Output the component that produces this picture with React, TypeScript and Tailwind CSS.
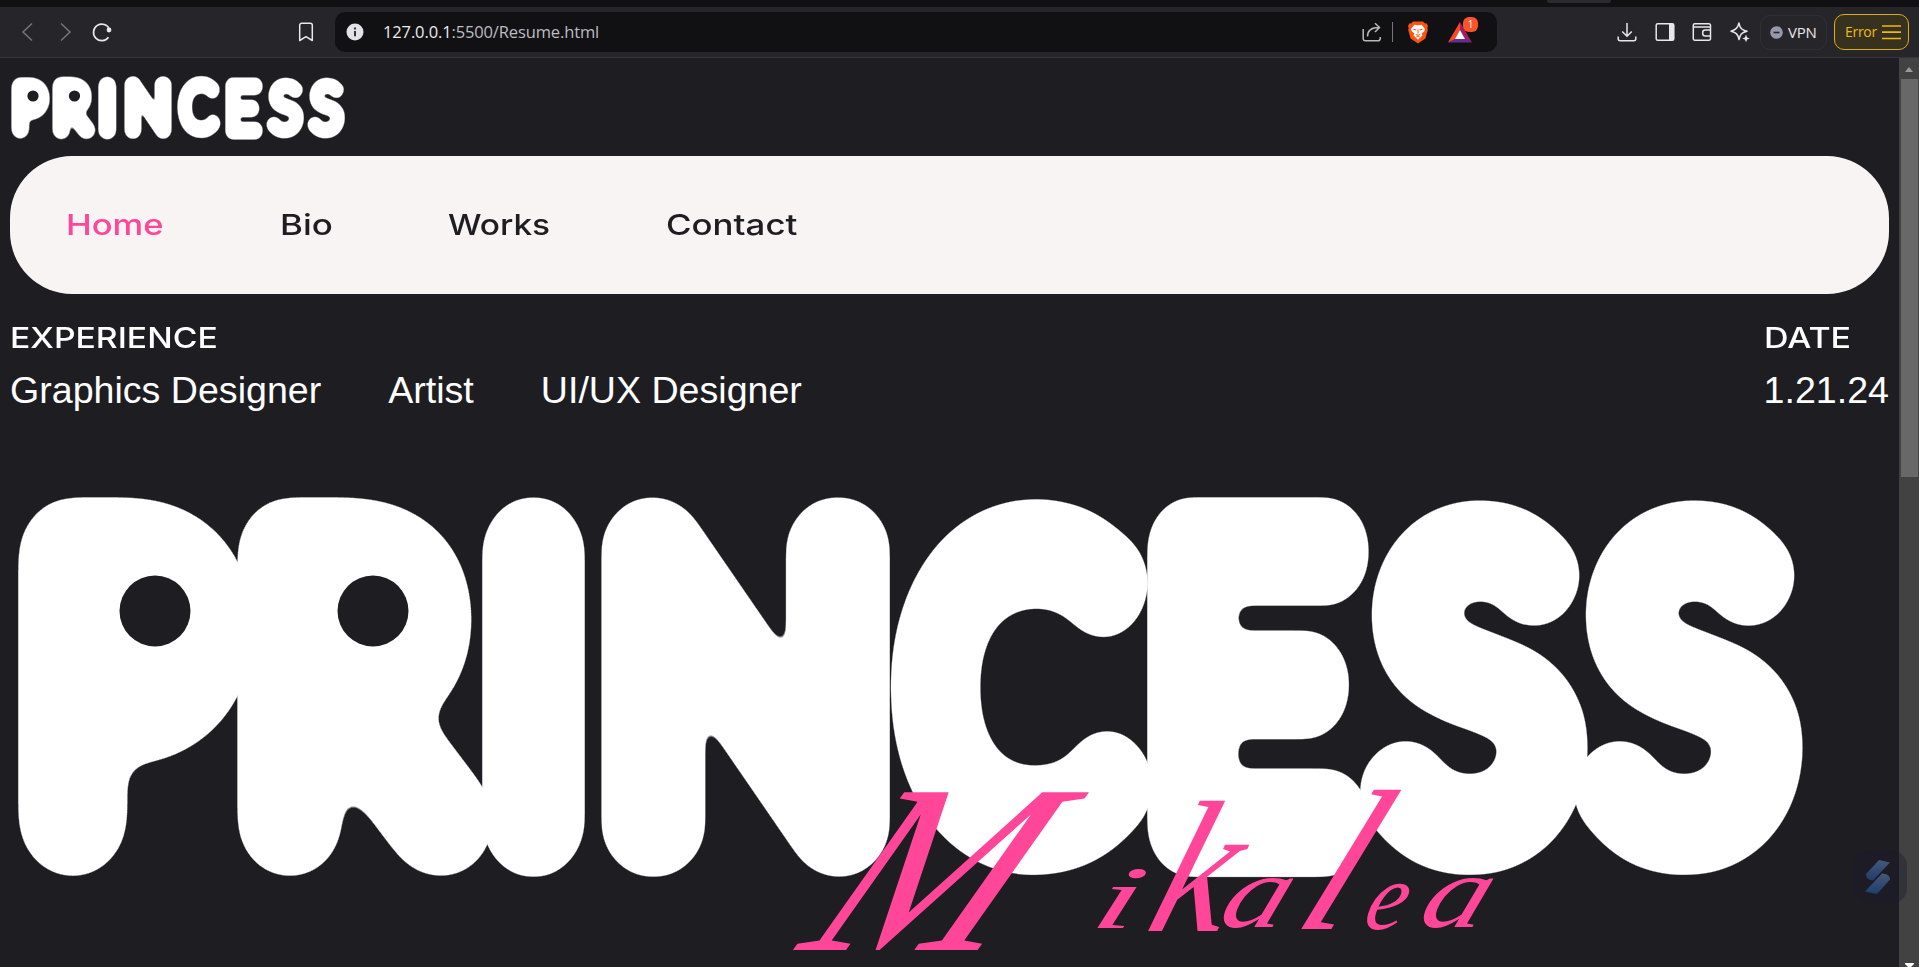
import React from 'react';

type Glyph = {
  char: string;
  x: number;
  y: number;
  w: number;
  h: number;
  outline: number;
  skew?: number;
  eye?: [number, number];
};

type InkBox = { left: number; top: number; width: number; height: number };

const EM = 100;
const SAMPLE = 10;

function measureInk(char: string, font: string): InkBox {
  const ctx = document.createElement('canvas').getContext('2d');
  if (!ctx) return { left: 0, top: -72, width: 60, height: 72 };
  ctx.font = font;
  const m = ctx.measureText(char);
  return {
    left: -m.actualBoundingBoxLeft / SAMPLE,
    top: -m.actualBoundingBoxAscent / SAMPLE,
    width: (m.actualBoundingBoxLeft + m.actualBoundingBoxRight) / SAMPLE,
    height: (m.actualBoundingBoxAscent + m.actualBoundingBoxDescent) / SAMPLE,
  };
}

/** Stretches one letter so that its inked area fills the given box. */
function fitTransform(g: Glyph, font: string): string {
  const ink = measureInk(g.char, font);
  const slope = Math.tan(((g.skew ?? 0) * Math.PI) / 180);
  const half = g.outline / 2;
  const sx = (g.w - g.h * slope) / (ink.width + g.outline);
  const sy = g.h / (ink.height + g.outline);
  return [
    `translate(${g.x} ${g.y + g.h})`,
    `skewX(${-(g.skew ?? 0)})`,
    `scale(${sx} ${sy})`,
    `translate(${half - ink.left} ${-half - ink.height - ink.top})`,
  ].join(' ');
}

const bubble: Glyph[] = [
  { char: 'P', x: 16, y: 496, w: 239, h: 381, outline: 32, eye: [155, 611] },
  { char: 'R', x: 235, y: 496, w: 262, h: 381, outline: 29.5, eye: [373, 611] },
  { char: 'I', x: 480, y: 496, w: 109, h: 381, outline: 30 },
  { char: 'N', x: 599, y: 496, w: 294, h: 381, outline: 27.5 },
  { char: 'C', x: 889, y: 495, w: 268, h: 383, outline: 28 },
  { char: 'E', x: 1145, y: 496, w: 226, h: 381, outline: 26.5 },
  { char: 'S', x: 1357, y: 496, w: 232, h: 382, outline: 25 },
  { char: 'S', x: 1571, y: 496, w: 233, h: 382, outline: 25 },
];

const smallSpans = [
  [11, 39],
  [52, 44],
  [98, 19],
  [124, 48],
  [177, 44],
  [225, 38],
  [266, 38],
  [307, 38],
];

const smallBubble: Glyph[] = bubble.map((g, i) => ({
  ...g,
  x: smallSpans[i][0],
  w: smallSpans[i][1],
  y: 77,
  h: 62,
  eye: g.eye ? [i === 0 ? 33 : 74.5, 96] : undefined,
}));

const script: Glyph[] = [
  { char: 'M', x: 792, y: 792, w: 300, h: 158, outline: 0, skew: 28 },
  { char: 'i', x: 1096, y: 868, w: 52, h: 60, outline: 0, skew: 18 },
  { char: 'k', x: 1146, y: 799, w: 120, h: 132, outline: 0, skew: 18 },
  { char: 'a', x: 1217, y: 877, w: 78, h: 52, outline: 0, skew: 20 },
  { char: 'l', x: 1300, y: 788, w: 104, h: 141, outline: 0, skew: 24 },
  { char: 'e', x: 1362, y: 882, w: 50, h: 48, outline: 0, skew: 16 },
  { char: 'a', x: 1417, y: 877, w: 78, h: 52, outline: 0, skew: 20 },
];

function Wordmark({ glyphs, filter, eyeRadius }: { glyphs: Glyph[]; filter: string; eyeRadius: number }) {
  return (
    <>
      {glyphs.map((g, i) => (
        <g key={i}>
          <g filter={g.eye ? `url(#${filter}-soft)` : `url(#${filter})`}>
            <text
              transform={fitTransform(g, `100 ${EM * SAMPLE}px Lato`)}
              fontFamily="Lato, sans-serif"
              fontWeight={100}
              fontSize={EM}
              fill="#fff"
              stroke="#fff"
              strokeWidth={g.outline}
              strokeLinejoin="round"
              strokeLinecap="round"
            >
              {g.char}
            </text>
          </g>
          {g.eye && <circle cx={g.eye[0]} cy={g.eye[1]} r={eyeRadius} fill="#1e1d22" />}
        </g>
      ))}
    </>
  );
}

function RoundCorners({ id, radius }: { id: string; radius: number }) {
  return (
    <filter id={id} x="-20%" y="-20%" width="140%" height="140%" colorInterpolationFilters="sRGB">
      <feGaussianBlur stdDeviation={radius} />
      <feComponentTransfer>
        <feFuncR type="linear" slope="0" intercept="1" />
        <feFuncG type="linear" slope="0" intercept="1" />
        <feFuncB type="linear" slope="0" intercept="1" />
        <feFuncA type="linear" slope={radius * 2} intercept={0.5 - radius} />
      </feComponentTransfer>
    </filter>
  );
}

function Toolbar() {
  return (
    <header className="w-full shrink-0">
      <div className="flex h-[7px] bg-[#111113]">
        <div className="ml-[1547px] h-[3px] w-16 rounded-b-lg bg-[#2b2a2f]" />
      </div>
      <div className="flex h-[51px] items-center border-b border-[#36353a] bg-[#26252a] text-[#e8e7eb]">
        <svg className="ml-[18px] h-5 w-5" viewBox="0 0 20 20" fill="none" stroke="#77767c" strokeWidth="1.5">
          <path d="M14 1.500L5 10l9 8.500" />
        </svg>
        <svg className="ml-[17px] h-5 w-5" viewBox="0 0 20 20" fill="none" stroke="#77767c" strokeWidth="1.500">
          <path d="M6 1.500L15 10l-9 8.500" />
        </svg>
        <svg className="ml-[17px] h-5 w-5" viewBox="0 0 20 20" fill="none" stroke="currentColor" strokeWidth="1.700">
          <path d="M17.500 7.300A8.300 8.300 0 1 0 16.500 15.300" />
          <circle cx="17" cy="8" r="2.400" fill="currentColor" stroke="none" />
        </svg>
        <svg className="ml-[184px] h-5 w-5" viewBox="0 0 20 20" fill="none" stroke="currentColor" strokeWidth="1.500">
          <path d="M3.700 3.200a2 2 0 0 1 2-2h8.600a2 2 0 0 1 2 2v15.300L10 14.600l-6.300 3.900z" strokeLinejoin="round" />
        </svg>
        <div className="ml-[19px] flex h-10 w-[1162px] items-center rounded-[10px] bg-[#111113]">
          <svg className="ml-[11px] h-[18px] w-[18px]" viewBox="0 0 18 18">
            <circle cx="9" cy="9" r="8.500" fill="#e3e2e8" />
            <path d="M9 8v5.200M9 4.600v1.900" stroke="#222126" strokeWidth="1.800" />
          </svg>
          <div className="ml-[19px] w-[700px] whitespace-nowrap font-['Open_Sans',sans-serif] text-[16.5px] leading-6 tracking-[-0.13px] text-[#bdbcc2]">
            <span className="text-[#ecebef]">127.0.0.1</span>:5500/Resume.html
          </div>
          <svg className="ml-[279px] h-5 w-5" viewBox="0 0 20 20" fill="none" stroke="#b9b8bd" strokeWidth="1.500">
            <path d="M1.200 7v9.500a2.300 2.300 0 0 0 2.300 2.300h12.500a2.300 2.300 0 0 0 2.300-2.300V15" />
            <path d="M5.500 14.500C5.500 8.500 9 5.500 17 5.500M13 1.200l4.500 4.300L13 10" />
          </svg>
          <div className="ml-[10px] h-5 w-px bg-[#77767c]" />
          <svg className="ml-[15px] h-[23px] w-5" viewBox="0 0 20 23">
            <path d="M5 .5h10l2 2 1.500-.2L20 5l-.7 2 .5 2-2.400 8.500L10 22.500l-7.400-5L.2 9l.5-2L0 5l1.500-2.700L3 2.500z" fill="#fb5410" />
            <path d="M10 4.300l3.600-.6L17 8l-.7 2.200-2.500 2.300.5 2L10 18.800l-4.300-4.300.5-2-2.500-2.300L3 8l3.400-4.300z" fill="#fff" />
            <path d="M5.300 8.200l3 .8M14.700 8.200l-3 .8M10 8.500v4M7.700 13.300l2.300 1 2.300-1M8.200 16l1.800-1 1.800 1" stroke="#fb5410" strokeWidth="1" fill="none" />
          </svg>
          <div className="relative ml-5 h-[21px] w-6">
            <svg className="h-[21px] w-6" viewBox="0 0 24 21">
              <path d="M12 0v8L7 17.500 0 20.500z" fill="#ff4724" />
              <path d="M12 0l12 20.500-7-3L12 8z" fill="#9e1f63" />
              <path d="M0 20.500h24l-7-3.500H7z" fill="#662d91" />
              <path d="M12 8l5 9H7z" fill="#fff" />
            </svg>
            <span className="absolute -top-[5px] left-[15px] flex h-[15px] w-[15px] items-center justify-center rounded-[6px] bg-[#fb542b] font-['Open_Sans',sans-serif] text-[10px] leading-none text-white">
              1
            </span>
          </div>
        </div>
        <svg className="ml-[120px] h-5 w-5" viewBox="0 0 20 20" fill="none" stroke="currentColor" strokeWidth="1.500">
          <path d="M10 1v13M5.200 9.500L10 14.300l4.800-4.800M1.200 14.500v2.300a2 2 0 0 0 2 2h13.600a2 2 0 0 0 2-2v-2.300" />
        </svg>
        <svg className="ml-[18px] h-5 w-5" viewBox="0 0 20 20" fill="none" stroke="currentColor" strokeWidth="1.500">
          <rect x="1.200" y="1.700" width="17.600" height="16.600" rx="1.500" />
          <path d="M14 2h5v16h-5z" fill="currentColor" stroke="none" />
        </svg>
        <svg className="ml-[17px] h-5 w-5" viewBox="0 0 20 20" fill="none" stroke="currentColor" strokeWidth="1.500">
          <path d="M18.500 6V3.300a1.500 1.500 0 0 0-1.500-1.500H2.800a1.500 1.500 0 0 0-1.500 1.500v13.400a1.500 1.500 0 0 0 1.500 1.500h14.200a1.500 1.500 0 0 0 1.500-1.500V5H1.500" />
          <path d="M18.500 8h-5.300a2.500 2.500 0 0 0-2.500 2.500v1a2.500 2.500 0 0 0 2.500 2.500h5.300" />
        </svg>
        <svg className="ml-[18px] h-5 w-5" viewBox="0 0 20 20" fill="none" stroke="currentColor" strokeWidth="1.500" strokeLinejoin="round">
          <path d="M9 1c.8 5 2.500 7 8 8.200-3 .6-5 1.500-6 3.200-.9 1.400-1.300 2.700-2 5.200C8 12.300 6.200 10.400 1 9.200 6 8 8 6 9 1z" />
          <path d="M16 12.500l1.100 2.900 2.700 1.100-2.700 1.100-1.100 2.700-1.100-2.700-2.700-1.100 2.700-1.100z" fill="currentColor" stroke="none" />
        </svg>
        <div className="ml-[10px] flex h-[35px] w-[67px] items-center rounded-[10px] border border-[#302f35] pl-[9px]">
          <svg className="h-[13px] w-[13px]" viewBox="0 0 13 13">
            <circle cx="6.500" cy="6.500" r="6.300" fill="#9698ac" />
            <path d="M3.500 6.500h6" stroke="#26252a" strokeWidth="1.600" />
          </svg>
          <span className="ml-[5px] font-['Open_Sans',sans-serif] text-[15px] leading-5 tracking-[-0.2px]">VPN</span>
        </div>
        <div className="ml-[7px] flex h-9 w-[75px] items-center rounded-[10px] border-[1.5px] border-[#e0ac10] bg-[#37321f] pl-[10px] text-[#f0b90b]">
          <span className="font-['Open_Sans',sans-serif] text-sm leading-5 tracking-[-0.3px]">Error</span>
          <svg className="ml-[5px] h-4 w-[19px]" viewBox="0 0 19 16" fill="none" stroke="currentColor" strokeWidth="1.700">
            <path d="M0 2h19M0 8.200h19M0 14.500h19" />
          </svg>
        </div>
      </div>
    </header>
  );
}

function Scrollbar() {
  return (
    <div className="flex h-full w-5 shrink-0 flex-col items-center bg-[#424242]">
      <svg className="mt-[9px] h-[5px] w-2 shrink-0" viewBox="0 0 8 5">
        <path d="M4 0l4 5H0z" fill="#9a9a9a" />
      </svg>
      <div className="mt-[7px] h-[398px] w-[17px] shrink-0 bg-[#686868]" />
      <svg className="mt-auto h-1 w-[9px] shrink-0" viewBox="0 0 9 4">
        <path d="M0 0h9v1L6 4H3L0 1z" fill="#fff" />
      </svg>
    </div>
  );
}

export default function App() {
  return (
    <div className="relative flex h-[967px] w-[1919px] flex-col overflow-hidden bg-[#1e1d22]">
      <Toolbar />
      <div className="flex min-h-0 flex-1">
        <main className="flex w-[1899px] flex-col">
          <svg className="block h-[98px] w-[400px]" viewBox="0 58 400 98" role="img" aria-label="PRINCESS">
            <defs>
              <RoundCorners id="round-small" radius={1.2} />
              <RoundCorners id="round-small-soft" radius={2} />
            </defs>
            <Wordmark glyphs={smallBubble} filter="round-small" eyeRadius={5.6} />
          </svg>
          <nav className="ml-[10px] flex h-[138px] w-[1879px] items-center rounded-[62px] bg-[#f8f4f3] pl-[56px] font-['Inter',sans-serif] text-[28.8px] font-medium leading-9 text-[#1e1d22]">
            <a className="w-[214px]">
              <span className="inline-block origin-left scale-x-[1.2] text-[#ff4698]">Home</span>
            </a>
            <a className="w-[168px]">
              <span className="inline-block origin-left scale-x-[1.21]">Bio</span>
            </a>
            <a className="w-[218px]">
              <span className="inline-block origin-left scale-x-[1.16]">Works</span>
            </a>
            <a>
              <span className="inline-block origin-left scale-x-[1.21]">Contact</span>
            </a>
          </nav>
          <section className="flex h-[126px] justify-between pl-[10px] pr-[10px] pt-[26px] text-white">
            <div>
              <h2 className="origin-left scale-x-[1.17] font-['Inter',sans-serif] text-[28.8px] font-medium leading-9">EXPERIENCE</h2>
              <div className="mt-3 flex gap-[67px] whitespace-nowrap font-['Liberation_Sans',sans-serif] text-[37.6px] leading-[44px]">
                <span>Graphics Designer</span>
                <span>Artist</span>
                <span>UI/UX Designer</span>
              </div>
            </div>
            <div>
              <h2 className="origin-left scale-x-[1.18] font-['Inter',sans-serif] text-[28.8px] font-medium leading-9">DATE</h2>
              <div className="mt-3 font-['Liberation_Sans',sans-serif] text-[37.6px] leading-[44px]">1.21.24</div>
            </div>
          </section>
          <svg className="block h-[547px] w-[1899px]" viewBox="0 420 1899 547" role="img" aria-label="PRINCESS Mikalea">
            <defs>
              <RoundCorners id="round-large" radius={7} />
              <RoundCorners id="round-large-soft" radius={13} />
            </defs>
            <Wordmark glyphs={bubble} filter="round-large" eyeRadius={35.5} />
            {script.map((g, i) => (
              <text
                key={i}
                transform={fitTransform(g, `italic ${EM * SAMPLE}px "Liberation Serif"`)}
                fontFamily="Liberation Serif, serif"
                fontStyle="italic"
                fontSize={EM}
                fill="#ff4698"
              >
                {g.char}
              </text>
            ))}
          </svg>
        </main>
        <Scrollbar />
      </div>
      <div className="absolute left-[1853px] top-[850px] flex h-[54px] w-[54px] items-center justify-center rounded-2xl bg-[#1b1b2e]/40">
        <svg className="-ml-1 h-[34px] w-[26px] opacity-85" viewBox="0 0 26 34">
          <defs>
            <linearGradient id="badge" x1="0" y1="0" x2="0" y2="1">
              <stop offset="0" stopColor="#4d6488" />
              <stop offset="1" stopColor="#1f4478" />
            </linearGradient>
          </defs>
          <path d="M14 0l11 2.500L8 20.500C3 20 1 17.500 1 14z" fill="url(#badge)" />
          <path d="M12 34L0 31.500 17 13.500c5 .5 8 2 8 6z" fill="url(#badge)" />
        </svg>
      </div>
    </div>
  );
}
